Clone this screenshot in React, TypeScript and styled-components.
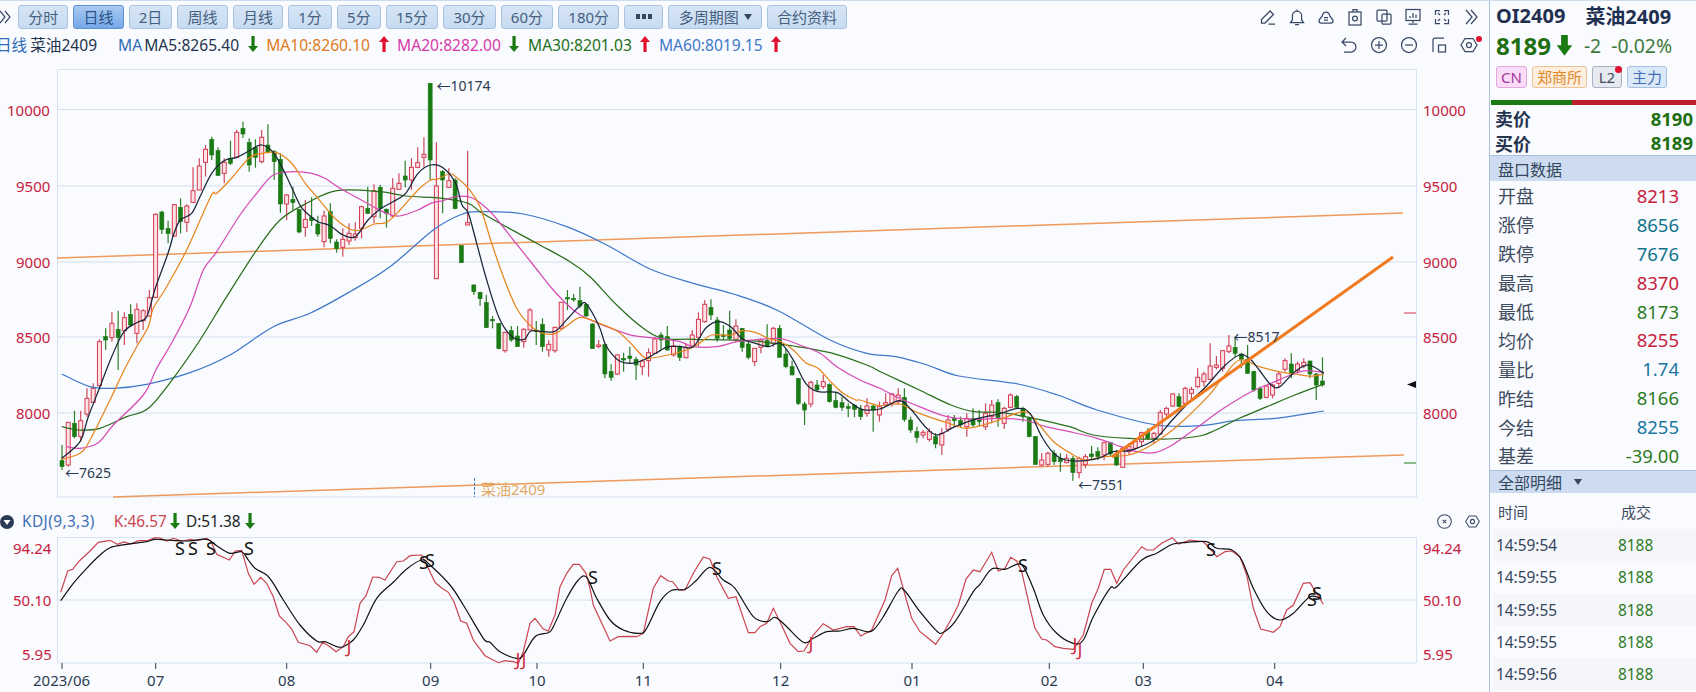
import React from 'react';
import styled, { createGlobalStyle } from 'styled-components';

const GlobalStyle = createGlobalStyle`
  html, body {
    margin: 0;
    padding: 0;
    background: #f9fbff;
    overflow: hidden;
  }
  body {
    font-family: "Noto Sans", "Noto Sans CJK SC", sans-serif;
  }
`;

const Page = styled.div`
  width: 1696px;
  height: 692px;
  box-sizing: border-box;
  border-top: 1px solid #cddcec;
  display: grid;
  grid-template-columns: 1489px 207px;
  overflow: hidden;
  color: #2d3b50;
`;

const Main = styled.div`
  display: flex;
  flex-direction: column;
  min-width: 0;
`;

const Toolbar = styled.div`
  height: 31px;
  display: flex;
  align-items: center;
  gap: 5px;
  padding-right: 8px;
`;

const Collapse = styled.span`
  width: 13px;
  display: flex;
`;

const Btn = styled.button<{ $active?: boolean }>`
  height: 24px;
  box-sizing: border-box;
  padding: 0 9.15px;
  margin: 0;
  border: 1px solid ${(p) => (p.$active ? '#5f92d4' : '#a9c3e0')};
  border-radius: 3px;
  background: ${(p) =>
    p.$active ? 'linear-gradient(#a9c9f1, #76a8e8)' : 'linear-gradient(#d6e5f6, #c8dbf1)'};
  color: ${(p) => (p.$active ? '#2b5385' : '#46607f')};
  font: 15px "Noto Sans", "Noto Sans CJK SC", sans-serif;
  line-height: 22px;
  display: flex;
  align-items: center;
  gap: 5px;
  white-space: nowrap;
`;

const Caret = styled.i`
  width: 0;
  height: 0;
  border-left: 4px solid transparent;
  border-right: 4px solid transparent;
  border-top: 6px solid #34475f;
`;

const IconGroup = styled.div<{ $gap: number }>`
  margin-left: auto;
  display: flex;
  align-items: center;
  gap: ${(p) => p.$gap}px;
`;

const InfoRow = styled.div`
  height: 25px;
  margin: 0 0 5px -4px;
  display: flex;
  align-items: center;
  padding-right: 10px;
  font-size: 15.6px;
  white-space: nowrap;
`;

const Label = styled.span<{ $color: string; $gap?: number; $track?: number }>`
  color: ${(p) => p.$color};
  margin-left: ${(p) => p.$gap ?? 0}px;
  letter-spacing: ${(p) => p.$track ?? 0}px;
`;

const ArrowBox = styled.span<{ $gap?: number }>`
  display: inline-flex;
  margin: 0 ${(p) => p.$gap ?? 8.5}px;
`;

const Chart = styled.svg`
  display: block;
  flex: none;
  font-family: "Noto Sans", "Noto Sans CJK SC", sans-serif;
`;

const KdjHead = styled.div`
  height: 28px;
  flex: none;
  display: flex;
  align-items: center;
  padding: 5px 8px 0 0;
  box-sizing: border-box;
  font-size: 15.4px;
  white-space: nowrap;
`;

const Side = styled.aside`
  border-left: 1px solid #a9c1dc;
  display: flex;
  flex-direction: column;
  min-width: 0;
`;

const TitleRow = styled.div`
  height: 29px;
  padding-left: 6px;
  display: flex;
  align-items: center;
  gap: 20px;
  font-size: 20px;
  font-weight: 700;
  color: #1f2f50;
`;

const PriceRow = styled.div`
  height: 30px;
  padding-left: 6px;
  display: flex;
  align-items: center;
  color: #3f7a3c;
  font-size: 19.4px;
`;

const BigPrice = styled.span`
  font-size: 24px;
  font-weight: 700;
  color: #1f6f12;
  margin-right: 7px;
`;

const TagRow = styled.div`
  margin-top: 6px;
  padding-left: 6px;
  display: flex;
  gap: 5px;
`;

const Tag = styled.span<{ $bg: string; $line: string; $color: string }>`
  position: relative;
  height: 22px;
  box-sizing: border-box;
  padding: 0 4px;
  min-width: 30px;
  border: 1px solid ${(p) => p.$line};
  border-radius: 3px;
  background: ${(p) => p.$bg};
  color: ${(p) => p.$color};
  font-size: 15px;
  line-height: 20px;
  text-align: center;
`;

const Dot = styled.i<{ $size: number; $top: number; $right: number }>`
  position: absolute;
  width: ${(p) => p.$size}px;
  height: ${(p) => p.$size}px;
  top: ${(p) => p.$top}px;
  right: ${(p) => p.$right}px;
  border-radius: 50%;
  background: #e0122f;
`;

const Ratio = styled.div`
  margin: 12px 0 0 1px;
  height: 5px;
  display: flex;
`;

const RatioPart = styled.i<{ $color: string; $grow: number }>`
  flex: ${(p) => p.$grow};
  background: ${(p) => p.$color};
`;

const Quote = styled.div`
  padding: 1px 3px 0 5px;
`;

const QuoteRow = styled.div`
  height: 24.5px;
  display: flex;
  align-items: center;
  justify-content: space-between;
  font-size: 18px;
  font-weight: 700;
  color: #26344f;
`;

const QuoteValue = styled.span`
  font-size: 18.5px;
  color: #1f6f12;
`;

const SectionHead = styled.div<{ $h: number }>`
  height: ${(p) => p.$h}px;
  box-sizing: border-box;
  border-top: 1px solid #a9c1dc;
  background: #cddcf0;
  padding-left: 8px;
  display: flex;
  align-items: center;
  gap: 12px;
  font-size: 16px;
  color: #34475f;
`;

const DataRow = styled.div`
  height: 28.9px;
  padding: 0 17px 0 8px;
  display: flex;
  align-items: center;
  justify-content: space-between;
  font-size: 18px;
  color: #3f4c60;
`;

const DataValue = styled.span<{ $color: string }>`
  font-size: 18.5px;
  color: ${(p) => p.$color};
`;

const TickHead = styled.div`
  height: 36px;
  padding: 2px 0 0 8px;
  box-sizing: border-box;
  display: grid;
  grid-template-columns: 123px 1fr;
  align-items: center;
  font-size: 15px;
  color: #3f4c60;
`;

const TickRow = styled.div<{ $odd: boolean }>`
  height: 32.3px;
  margin-left: 3px;
  padding: 1px 0 0 3px;
  box-sizing: border-box;
  display: grid;
  grid-template-columns: 122px 1fr;
  align-items: center;
  font-size: 15.4px;
  color: #36445a;
  background: ${(p) => (p.$odd ? '#f4f6fa' : 'transparent')};
`;

const TickPrice = styled.span`
  color: #2d7a1f;
`;

const Arrow = ({ up, size = 14, thick }: { up: boolean; size?: number; thick?: boolean }) => {
  const stem = thick ? 'H7.6 V16 H2.4 V8 H-1' : 'H6.6 V16 H3.4 V6 H0';
  const down = thick ? 'M5 16 L11 8 H7.6 V0 H2.4 V8 H-1 Z' : 'M5 16 L10 10 H6.6 V0 H3.4 V10 H0 Z';
  const rise = `M5 0 L${thick ? '11 8' : '10 6'} ${stem} Z`;
  return (
    <svg width={size * 0.72} height={size * 1.15} viewBox="0 0 10 16" overflow="visible">
      <path d={up ? rise : down} fill={up ? '#e0122f' : '#1c7a12'} />
    </svg>
  );
};

const ICONS: Record<string, React.ReactNode> = {
  pencil: <path d="M3.5 16V12.5L12 4l3.5 3.5L7 16ZM10.5 17H17" />,
  bell: <path d="M10 2.5V4M10 4a4.6 4.6 0 0 0-4.6 4.6V13L3.5 15.5h13L14.6 13V8.6A4.6 4.6 0 0 0 10 4ZM8 17.5h4" />,
  cloud: (
    <path d="M3 14c0-2.5 1.8-3 3-4.5C6.5 7 8 5 10 5s3.5 2 4 4.5c1.2 1.5 3 2 3 4.5 0 1.2-1 2-2.2 2H5.2C4 16 3 15.2 3 14ZM8 10.5h4M8 13h4" />
  ),
  shot: (
    <>
      <rect x="4" y="5" width="12" height="13" />
      <path d="M8 5V2.5h4V5" />
      <circle cx="10" cy="11.5" r="2.4" />
    </>
  ),
  copy: (
    <>
      <rect x="3" y="3" width="10" height="11" rx="1" />
      <rect x="8" y="7" width="9" height="10" rx="1" />
    </>
  ),
  monitor: (
    <>
      <rect x="3" y="2.5" width="14" height="11" />
      <path d="M7 11V9M10 11V6M13 11V7.5M10 13.5V16M5.5 17h9" />
    </>
  ),
  full: <path d="M3.5 8V3.5H8M12 3.5h4.5V8M16.5 12v4.5H12M8 16.5H3.5V12M6 6l2 2M14 6l-2 2M14 14l-2-2M6 14l2-2" />,
  chevrons: <path d="M5 3l6 7-6 7M10 3l6 7-6 7" />,
  undo: <path d="M7 3L3 7l4 4M3 7h9a5 5 0 0 1 0 10H5" />,
  plus: (
    <>
      <circle cx="10" cy="10" r="7.5" />
      <path d="M6 10h8M10 6v8" />
    </>
  ),
  minus: (
    <>
      <circle cx="10" cy="10" r="7.5" />
      <path d="M6 10h8" />
    </>
  ),
  layout: (
    <>
      <path d="M15 3H6a2 2 0 0 0-2 2v12" />
      <rect x="9.5" y="10" width="7" height="7" />
    </>
  ),
  hex: (
    <>
      <path d="M6 3.5h8l4 6.5-4 6.5H6L2 10Z" />
      <circle cx="10" cy="10" r="2.5" />
    </>
  ),
  close: (
    <>
      <circle cx="10" cy="10" r="8" />
      <path d="M8 8l4 4M12 8l-4 4" />
    </>
  ),
};

const Icon = ({ name, size = 20 }: { name: string; size?: number }) => (
  <svg width={size} height={size} viewBox="0 0 20 20" fill="none" stroke="#3a4a66" strokeWidth="1.25">
    {ICONS[name]}
  </svg>
);

const HexBadge = styled.span`
  position: relative;
  display: inline-flex;
`;

// coordinates were read off crops of the reference: each helper undoes one crop's scale
const toPts = (raw: number[], x0: number, sx: number, y0: number) => {
  const out: number[][] = [];
  for (let i = 0; i < raw.length; i += 2) out.push([x0 + raw[i] / sx, y0 + raw[i + 1] / 3]);
  return out;
};
const a = (r: number[]) => toPts(r, 0, 3, 70);
const b = (r: number[]) => toPts(r, 400, 3, 70);
const c = (r: number[]) => toPts(r, 860, 2.53, 230);
const k1 = (r: number[]) => toPts(r, 0, 3, 505);
const k2 = (r: number[]) => toPts(r, 490, 3, 505);
const k3 = (r: number[]) => toPts(r, 980, 3, 505);

// crops overlap a little, keep x increasing so seams don't kink
const forward = (pts: number[][]) => {
  const out: number[][] = [];
  pts.forEach((p) => {
    if (!out.length || p[0] > out[out.length - 1][0] + 1) out.push(p);
  });
  return out;
};

// catmull-rom through the read points
const smooth = (raw: number[][]) => {
  const p = forward(raw);
  let d = `M${p[0][0].toFixed(1)} ${p[0][1].toFixed(1)}`;
  for (let i = 0; i < p.length - 1; i++) {
    const p0 = p[i - 1] || p[i];
    const p1 = p[i];
    const p2 = p[i + 1];
    const p3 = p[i + 2] || p2;
    const c1x = p1[0] + (p2[0] - p0[0]) / 6;
    const c1y = p1[1] + (p2[1] - p0[1]) / 6;
    const c2x = p2[0] - (p3[0] - p1[0]) / 6;
    const c2y = p2[1] - (p3[1] - p1[1]) / 6;
    d += `C${c1x.toFixed(1)} ${c1y.toFixed(1)} ${c2x.toFixed(1)} ${c2y.toFixed(1)} ${p2[0].toFixed(1)} ${p2[1].toFixed(1)}`;
  }
  return d;
};

const jagged = (raw: number[][]) =>
  forward(raw)
    .map((p) => `${p[0].toFixed(1)},${p[1].toFixed(1)}`)
    .join(' ');

const MA_LINES = [
  {
    color: '#3f78c9',
    d: smooth([
      ...a([185, 912, 270, 950, 340, 955, 440, 943, 570, 908, 690, 855, 820, 770, 930, 730, 1050, 665, 1170, 590, 1300, 480, 1380, 435]),
      ...b([240, 425, 370, 432, 500, 470, 620, 525, 750, 597, 880, 640, 1000, 672, 1130, 720, 1290, 810, 1400, 850]),
      ...c([0, 362, 90, 380, 170, 405, 250, 438, 400, 462, 500, 495, 600, 540, 750, 585, 860, 587, 950, 572, 1050, 565, 1174, 543]),
    ]),
  },
  {
    color: '#2a6e1a',
    d: smooth([
      ...a([185, 1070, 240, 1080, 300, 1075, 380, 1040, 445, 1015, 520, 925, 600, 810, 680, 680, 770, 540, 840, 450, 920, 400, 1010, 362, 1140, 365, 1217, 378, 1329, 385, 1405, 400]),
      ...b([240, 425, 300, 460, 410, 520, 510, 575, 570, 620, 650, 705, 730, 775, 790, 805, 880, 808, 1050, 812, 1180, 828, 1290, 848, 1400, 885]),
      ...c([0, 398, 60, 430, 150, 480, 230, 525, 290, 545, 360, 548, 440, 565, 530, 590, 590, 615, 680, 625, 780, 627, 860, 618, 900, 600, 960, 565, 1030, 530, 1100, 495, 1174, 462]),
    ]),
  },
  {
    color: '#d64cb4',
    d: smooth([
      ...a([200, 1130, 240, 1135, 295, 1118, 340, 1065, 430, 975, 470, 895, 520, 810, 570, 710, 610, 600, 650, 545, 720, 435, 770, 370, 820, 315, 880, 305, 935, 310, 975, 325, 1020, 355, 1066, 380, 1120, 410, 1160, 430, 1198, 438, 1254, 420, 1292, 400, 1329, 392, 1367, 380, 1405, 380]),
      ...b([240, 398, 280, 435, 340, 510, 400, 585, 460, 660, 520, 720, 560, 745, 620, 770, 700, 797, 780, 805, 840, 815, 880, 830, 950, 830, 1010, 815, 1060, 810, 1140, 806, 1200, 825, 1260, 850, 1310, 890, 1380, 930]),
      ...c([0, 445, 50, 475, 100, 505, 150, 530, 220, 560, 290, 568, 350, 565, 415, 570, 470, 590, 530, 605, 600, 625, 660, 650, 700, 665, 745, 668, 790, 645, 850, 595, 920, 535, 990, 485, 1040, 460, 1090, 435, 1130, 422, 1174, 428]),
    ]),
  },
  {
    color: '#e8871e',
    d: smooth([
      ...a([185, 1168, 240, 1150, 270, 1110, 330, 990, 370, 905, 410, 830, 445, 770, 460, 715, 500, 650, 560, 540, 632, 380, 650, 370, 690, 330, 747, 265, 785, 250, 830, 248, 875, 280, 916, 340, 954, 385, 1010, 450, 1066, 482, 1123, 462, 1160, 457, 1200, 420, 1254, 360, 1292, 330, 1311, 328, 1348, 312, 1367, 320]),
      ...b([205, 355, 240, 410, 275, 520, 310, 620, 350, 715, 392, 768, 430, 790, 467, 790, 504, 765, 542, 742, 598, 760, 654, 785, 692, 820, 730, 860, 748, 865, 804, 855, 860, 840, 898, 820, 935, 795, 992, 795, 1029, 782, 1067, 788, 1105, 805, 1142, 815, 1180, 840, 1217, 878, 1254, 895, 1292, 935, 1329, 970, 1367, 990]),
      ...c([0, 510, 50, 527, 100, 522, 150, 550, 220, 578, 270, 595, 340, 575, 415, 545, 450, 580, 490, 635, 540, 675, 570, 690, 620, 680, 680, 675, 730, 650, 780, 610, 820, 570, 880, 500, 920, 440, 960, 390, 1010, 410, 1060, 425, 1100, 432, 1140, 438, 1174, 432]),
    ]),
  },
  {
    color: '#18263a',
    d: smooth([
      ...a([185, 1165, 240, 1115, 265, 1040, 300, 950, 335, 860, 372, 785, 410, 758, 440, 740, 466, 655, 504, 550, 522, 490, 541, 450, 575, 430, 600, 380, 635, 310, 672, 272, 710, 262, 747, 243, 785, 225, 822, 250, 860, 320, 897, 400, 916, 425, 954, 455, 991, 467, 1029, 495, 1066, 500, 1104, 450, 1141, 417, 1179, 395, 1217, 370, 1254, 310, 1292, 285, 1329, 293, 1367, 340, 1386, 405]),
      ...b([205, 430, 230, 520, 260, 630, 298, 745, 336, 800, 373, 808, 392, 783, 430, 785, 467, 783, 504, 745, 542, 705, 560, 703, 598, 770, 617, 825, 654, 870, 692, 880, 730, 870, 767, 850, 804, 830, 842, 830, 880, 830, 917, 775, 954, 755, 992, 770, 1029, 808, 1067, 820, 1105, 830, 1142, 820, 1180, 870, 1217, 940, 1254, 965, 1310, 967, 1348, 995, 1386, 1018]),
      ...c([0, 545, 50, 537, 100, 512, 130, 540, 165, 590, 195, 615, 240, 590, 290, 568, 350, 552, 400, 535, 430, 550, 460, 620, 490, 670, 520, 690, 570, 692, 610, 682, 640, 665, 680, 662, 720, 645, 750, 625, 790, 570, 830, 520, 875, 470, 920, 410, 960, 375, 985, 385, 1010, 420, 1040, 465, 1062, 470, 1100, 425, 1135, 405, 1174, 430]),
    ]),
  },
];

const K_LINE = jagged([
  ...k1([182, 262, 203, 198, 218, 193, 238, 168, 268, 140, 295, 112, 330, 106, 352, 118, 372, 111, 392, 117, 415, 107, 445, 106, 465, 98, 480, 99, 500, 108, 520, 100, 545, 108, 572, 103, 590, 107, 620, 100, 632, 108, 650, 148, 688, 165, 706, 138, 725, 136, 745, 205, 762, 238, 782, 217, 800, 235, 820, 275, 838, 333, 858, 352, 875, 372, 895, 412, 930, 422, 950, 442, 968, 412, 990, 425, 1008, 440, 1030, 425, 1045, 395, 1062, 380, 1080, 295, 1098, 272, 1118, 216, 1138, 217, 1155, 225, 1190, 170, 1210, 168, 1230, 152, 1265, 150, 1285, 190, 1305, 232, 1320, 245, 1345, 262, 1362, 290, 1382, 348, 1400, 355, 1420, 405, 1455, 452, 1495, 473]),
  ...k2([25, 473, 45, 467, 70, 470, 85, 475, 100, 440, 120, 355, 135, 340, 160, 372, 175, 378, 195, 330, 210, 245, 230, 205, 250, 178, 268, 178, 288, 205, 300, 250, 310, 300, 360, 408, 385, 395, 410, 394, 440, 395, 460, 385, 490, 250, 512, 212, 535, 228, 548, 230, 567, 255, 585, 255, 610, 205, 640, 156, 660, 163, 680, 215, 715, 280, 738, 275, 775, 383, 795, 383, 810, 365, 830, 355, 850, 310, 870, 350, 900, 415, 925, 440, 942, 438, 970, 390, 1000, 356, 1030, 375, 1070, 365, 1092, 365, 1112, 393, 1145, 375, 1185, 285, 1205, 212, 1223, 190, 1245, 270, 1265, 340, 1290, 380, 1315, 400, 1337, 418, 1360, 385, 1385, 340, 1405, 300, 1428, 222, 1450, 195, 1470, 200]),
  ...k3([0, 195, 35, 142, 55, 198, 75, 190, 92, 157, 110, 168, 125, 200, 150, 310, 165, 370, 185, 402, 200, 405, 225, 425, 250, 430, 280, 433, 310, 390, 335, 295, 355, 250, 373, 193, 392, 193, 410, 235, 430, 195, 485, 125, 500, 135, 520, 135, 545, 115, 577, 98, 595, 117, 630, 105, 670, 110, 690, 130, 710, 155, 735, 140, 755, 138, 780, 155, 800, 210, 820, 310, 842, 372, 880, 382, 900, 365, 920, 315, 940, 300, 970, 235, 990, 233, 1030, 298]),
]);

const D_LINE = smooth([
  ...k1([182, 287, 220, 235, 260, 190, 300, 150, 330, 128, 380, 118, 440, 110, 465, 103, 500, 105, 560, 108, 620, 103, 650, 122, 690, 145, 725, 140, 745, 165, 765, 190, 800, 210, 820, 235, 850, 285, 900, 360, 950, 408, 975, 410, 1010, 425, 1030, 425, 1060, 405, 1090, 360, 1130, 280, 1180, 232, 1220, 192, 1265, 165, 1290, 180, 1350, 240, 1390, 300, 1450, 400]),
  ...k2([0, 412, 30, 440, 80, 460, 100, 450, 135, 395, 175, 383, 190, 365, 230, 280, 265, 225, 290, 217, 320, 280, 360, 345, 400, 375, 450, 385, 470, 370, 510, 290, 545, 256, 585, 253, 620, 225, 660, 187, 700, 225, 735, 250, 790, 335, 830, 350, 855, 337, 885, 360, 940, 412, 970, 400, 1010, 380, 1050, 378, 1090, 370, 1130, 380, 1150, 375, 1180, 335, 1225, 258, 1243, 256, 1290, 320, 1340, 378, 1360, 382, 1395, 350, 1450, 260]),
  ...k3([0, 238, 35, 192, 75, 193, 110, 178, 130, 185, 160, 250, 190, 330, 230, 385, 280, 415, 310, 405, 340, 335, 390, 250, 410, 245, 485, 165, 530, 145, 577, 118, 620, 112, 680, 110, 710, 130, 755, 135, 785, 165, 820, 250, 860, 320, 900, 345, 940, 325, 990, 275, 1025, 282]),
]);

// wick top, body top, body bottom, wick bottom, 1 = rising
type Candle = [number, number, number, number, number];

const CANDLES_A: Candle[] = [
  [1125, 1172, 1190, 1200, 0], [1057, 1057, 1185, 1190, 1], [1022, 1060, 1100, 1105, 0], [1022, 1052, 1100, 1115, 1],
  [955, 985, 1032, 1040, 1], [940, 955, 997, 1000, 1], [808, 815, 947, 950, 1], [775, 800, 810, 840, 0],
  [727, 760, 803, 815, 1], [722, 778, 803, 900, 0], [727, 743, 782, 825, 1], [703, 733, 765, 770, 0],
  [700, 718, 790, 820, 1], [718, 722, 752, 780, 1], [660, 683, 738, 740, 1], [430, 433, 682, 685, 1],
  [422, 426, 478, 492, 0], [452, 475, 491, 520, 0], [403, 404, 498, 500, 1], [385, 412, 455, 490, 0],
  [403, 408, 457, 485, 1], [292, 362, 397, 398, 1], [265, 288, 360, 360, 1], [225, 238, 277, 320, 1],
  [200, 208, 255, 270, 0], [232, 242, 316, 318, 0], [265, 277, 310, 340, 1], [212, 265, 280, 285, 0],
  [180, 187, 262, 265, 1], [155, 175, 192, 203, 0], [205, 217, 285, 305, 0], [208, 233, 262, 293, 0],
  [180, 202, 275, 280, 1], [163, 225, 248, 250, 0], [240, 245, 275, 330, 0], [250, 268, 402, 428, 0],
  [372, 375, 402, 450, 1], [350, 388, 398, 420, 0], [418, 418, 486, 490, 0], [390, 448, 472, 500, 1],
  [382, 443, 452, 468, 0], [437, 462, 492, 500, 0], [422, 438, 515, 532, 1], [400, 425, 505, 520, 0],
  [508, 516, 536, 548, 0], [475, 508, 532, 560, 1], [460, 490, 513, 525, 1], [457, 492, 503, 512, 1],
  [407, 410, 475, 505, 1], [350, 415, 430, 432, 0], [343, 362, 440, 460, 1], [345, 352, 415, 445, 0],
  [415, 418, 430, 473, 0], [325, 355, 438, 440, 1], [310, 340, 358, 360, 1], [272, 318, 330, 352, 0],
  [265, 292, 330, 360, 1], [232, 278, 292, 295, 1], [202, 253, 262, 290, 1], [40, 40, 270, 330, 0],
  [217, 348, 626, 627, 1], [300, 305, 330, 430, 0], [295, 332, 352, 355, 1], [325, 330, 416, 418, 0],
  [527, 527, 578, 578, 0], [242, 458, 465, 465, 1], [643, 645, 665, 675, 0], [665, 667, 686, 708, 0],
  [675, 698, 773, 773, 0], [738, 748, 750, 775, 0], [760, 760, 836, 838, 0], [785, 787, 842, 848, 1],
  [768, 782, 810, 815, 0], [768, 798, 830, 830, 0], [775, 778, 815, 833, 1], [715, 720, 780, 780, 1],
  [753, 780, 785, 825, 0], [745, 763, 830, 845, 0], [810, 823, 840, 860, 1], [770, 772, 842, 848, 1],
  [695, 697, 775, 775, 1], [660, 682, 687, 720, 0], [672, 685, 688, 695, 0], [650, 692, 708, 715, 0],
  [700, 703, 738, 740, 0], [760, 762, 836, 836, 0], [810, 825, 828, 835, 1], [822, 824, 912, 925, 0],
  [883, 905, 922, 932, 0], [852, 855, 912, 915, 1], [848, 865, 870, 905, 0], [830, 858, 865, 880, 0],
  [860, 868, 885, 930, 0], [868, 873, 890, 915, 1], [835, 848, 872, 920, 1], [800, 807, 850, 852, 1],
  [787, 795, 810, 840, 0], [768, 800, 840, 842, 0], [810, 828, 855, 860, 1], [825, 830, 862, 873, 0],
  [820, 832, 863, 865, 1], [780, 795, 828, 830, 1], [727, 748, 802, 830, 1], [690, 703, 755, 758, 1],
  [688, 712, 735, 750, 0], [740, 750, 805, 815, 0], [765, 795, 800, 810, 0], [722, 780, 805, 810, 0],
  [748, 768, 808, 815, 1], [775, 775, 832, 845, 0], [815, 822, 862, 868, 0], [835, 835, 875, 888, 1],
  [805, 810, 832, 850, 1], [763, 812, 830, 832, 0], [770, 775, 820, 830, 1], [765, 775, 862, 862, 0],
  [835, 852, 890, 895, 0], [872, 890, 915, 915, 0], [925, 925, 1000, 1005, 0], [995, 1002, 1020, 1065, 0],
  [932, 937, 1002, 1012, 1], [930, 945, 960, 965, 0], [915, 935, 950, 957, 1], [940, 944, 995, 998, 0],
  [965, 992, 1012, 1015, 0], [980, 998, 1012, 1022, 0], [1000, 1010, 1015, 1042, 0], [1003, 1005, 1018, 1042, 0],
  [1005, 1018, 1040, 1050, 0], [985, 1008, 1030, 1040, 1], [1005, 1008, 1020, 1085, 0],
];

const CANDLES_B: Candle[] = [
  [515, 530, 555, 575, 1], [490, 518, 525, 530, 1], [488, 492, 520, 530, 1], [475, 495, 515, 525, 1],
  [475, 502, 568, 575, 0], [560, 570, 600, 608, 0], [590, 605, 622, 638, 0], [600, 607, 615, 625, 1],
  [595, 605, 628, 635, 1], [610, 620, 642, 655, 0], [595, 610, 645, 675, 1], [555, 570, 598, 605, 1],
  [555, 565, 572, 590, 0], [560, 572, 585, 592, 0], [550, 565, 590, 620, 1], [535, 565, 585, 590, 0],
  [540, 565, 575, 590, 0], [520, 550, 590, 600, 1], [510, 525, 560, 580, 1], [508, 518, 565, 590, 0],
  [530, 535, 580, 597, 1], [490, 495, 532, 535, 1], [495, 500, 532, 535, 0], [530, 535, 560, 575, 0],
  [560, 562, 620, 622, 0], [618, 620, 703, 705, 0], [670, 690, 705, 710, 1], [665, 670, 703, 710, 1],
  [660, 670, 695, 705, 0], [670, 685, 695, 725, 0], [672, 685, 698, 700, 1], [678, 685, 728, 752, 0],
  [680, 685, 728, 745, 1], [672, 680, 703, 715, 1], [648, 672, 680, 690, 0], [652, 665, 680, 690, 0],
  [635, 638, 675, 690, 1], [635, 638, 672, 680, 0], [660, 672, 705, 708, 0], [650, 655, 712, 712, 1],
  [640, 650, 665, 675, 1], [625, 635, 655, 660, 1], [605, 608, 635, 650, 1], [595, 605, 625, 630, 0],
  [605, 610, 625, 640, 1], [540, 548, 612, 615, 1], [530, 535, 552, 560, 1], [490, 492, 528, 530, 1],
  [490, 500, 530, 530, 0], [470, 475, 520, 525, 1], [470, 478, 490, 510, 1], [415, 442, 470, 475, 1],
  [425, 432, 455, 470, 1], [340, 408, 448, 450, 1], [378, 405, 412, 418, 1], [360, 362, 415, 425, 1],
  [315, 348, 365, 370, 1], [320, 352, 370, 380, 0], [368, 372, 388, 415, 0], [345, 388, 430, 432, 0],
  [422, 424, 480, 485, 0], [470, 476, 505, 510, 0], [465, 468, 502, 505, 1], [462, 465, 495, 505, 1],
  [425, 432, 460, 475, 1], [385, 392, 418, 425, 1], [370, 402, 432, 445, 0], [395, 402, 422, 430, 1],
  [385, 397, 408, 415, 1], [392, 393, 432, 445, 0], [430, 432, 465, 510, 0], [382, 453, 465, 470, 0],
];

const candles = [
  ...CANDLES_A.map((d) => d.map((v, i) => (i < 4 ? 70 + v / 3 : v))),
  ...CANDLES_B.map((d) => d.map((v, i) => (i < 4 ? 230 + v / 3 : v))),
];

const PRICE_GRID = [
  { y: 109.5, t: '10000', lx: 7 },
  { y: 186, t: '9500', lx: 16 },
  { y: 262, t: '9000', lx: 16 },
  { y: 337, t: '8500', lx: 16 },
  { y: 413, t: '8000', lx: 16 },
];

const X_TICKS = [
  { x: 62, t: '2023/06' },
  { x: 155.7, t: '07' },
  { x: 286.7, t: '08' },
  { x: 430.7, t: '09' },
  { x: 537, t: '10' },
  { x: 643.3, t: '11' },
  { x: 780.7, t: '12' },
  { x: 912, t: '01' },
  { x: 1049.3, t: '02' },
  { x: 1143.3, t: '03' },
  { x: 1274.7, t: '04' },
];

const KDJ_LEVELS = [
  { y: 548, t: '94.24', lx: 13, line: false },
  { y: 600, t: '50.10', lx: 13, line: true },
  { y: 654, t: '5.95', lx: 22, line: false },
];

const MARKS = [
  { x: 180, y: 555, t: 'S' },
  { x: 193, y: 555, t: 'S' },
  { x: 211, y: 555, t: 'S' },
  { x: 249, y: 555, t: 'S' },
  { x: 424, y: 569, t: 'S' },
  { x: 430, y: 567, t: 'S' },
  { x: 349, y: 653, t: 'J' },
  { x: 518, y: 666, t: 'J' },
  { x: 524, y: 666, t: 'J' },
  { x: 593, y: 584, t: 'S' },
  { x: 717, y: 575, t: 'S' },
  { x: 811, y: 650, t: 'J' },
  { x: 1023, y: 572, t: 'S' },
  { x: 1075, y: 651, t: 'J' },
  { x: 1080, y: 656, t: 'J' },
  { x: 1211, y: 556, t: 'S' },
  { x: 1312, y: 606, t: 'S' },
  { x: 1317, y: 600, t: 'S' },
];

const TEXT_RED = '#c8203c';

const PriceChart = () => (
  <Chart width={1489} height={443} viewBox="0 62 1489 443">
    <rect x="57.5" y="69.5" width="1359" height="427.5" fill="none" stroke="#d6e3f2" />
    {PRICE_GRID.map((g) => (
      <g key={g.t}>
        <line x1="57" x2="1417" y1={g.y} y2={g.y} stroke="#d3e0f0" strokeWidth="1.2" />
        <text x={g.lx} y={g.y + 6} fontSize="15" fill={TEXT_RED}>{g.t}</text>
        <text x="1423" y={g.y + 6} fontSize="15" fill={TEXT_RED}>{g.t}</text>
      </g>
    ))}
    <line x1="57" y1="258" x2="1403" y2="213" stroke="#ee9a5c" strokeWidth="1.5" />
    <line x1="113" y1="497" x2="1404" y2="455" stroke="#ee9a5c" strokeWidth="1.5" />
    {candles.map((d, i) => {
      const x = 62 + i * 6.24;
      const col = d[4] ? '#d8394f' : '#1c7a14';
      return (
        <g key={i}>
          <line x1={x} x2={x} y1={d[0]} y2={d[3]} stroke={d[4] ? '#c94a5a' : '#2f7d28'} strokeWidth="1.2" />
          <rect
            x={x - 2}
            y={d[1]}
            width="4"
            height={Math.max(d[2] - d[1], 1.5)}
            fill={d[4] ? '#fbe3e7' : col}
            stroke={col}
            strokeWidth={d[4] ? 1 : 0.6}
          />
        </g>
      );
    })}
    {MA_LINES.map((l) => (
      <path key={l.color} d={l.d} fill="none" stroke={l.color} strokeWidth="1.25" />
    ))}
    <line x1="1112" y1="457" x2="1393" y2="257" stroke="#f07a20" strokeWidth="3" />
    <line x1="474.5" x2="474.5" y1="478" y2="497" stroke="#3f78c9" strokeDasharray="3 1.5" />
    <text x="481" y="494.5" fontSize="15" fill="#e2a864">菜油2409</text>
    <text x="65" y="478" fontSize="14" fill="#2d3b50">←7625</text>
    <text x="436.5" y="90.5" fontSize="14" fill="#2d3b50">←10174</text>
    <text x="1078" y="490" fontSize="14" fill="#2d3b50">←7551</text>
    <text x="1233.5" y="342" fontSize="14" fill="#2d3b50">←8517</text>
    <line x1="1404" x2="1416" y1="313" y2="313" stroke="#d8394f" />
    <line x1="1404" x2="1416" y1="463" y2="463" stroke="#1c7a14" />
    <path d="M1407 384.5 L1416 381 V388 Z" fill="#111" />
  </Chart>
);

const KdjChart = () => (
  <Chart width={1489} height={159} viewBox="0 533 1489 159">
    <path d="M57.5 663V537.5H1416.5V663H57.5" fill="none" stroke="#d6e3f2" />
    {KDJ_LEVELS.map((l) => (
      <g key={l.t}>
        {l.line && <line x1="57" x2="1417" y1={l.y} y2={l.y} stroke="#d3e0f0" strokeWidth="1.2" />}
        <text x={l.lx} y={l.y + 5.5} fontSize="15" fill={TEXT_RED}>{l.t}</text>
        <text x="1423" y={l.y + 5.5} fontSize="15" fill={TEXT_RED}>{l.t}</text>
      </g>
    ))}
    <polyline points={K_LINE} fill="none" stroke="#cc4450" strokeWidth="1.2" />
    <path d={D_LINE} fill="none" stroke="#111" strokeWidth="1.2" />
    {MARKS.map((m, i) => (
      <text key={i} x={m.x} y={m.y} fontSize="18" textAnchor="middle" fill={m.t === 'J' ? '#d12c40' : '#111'}>{m.t}</text>
    ))}
    {X_TICKS.map((t) => (
      <g key={t.t}>
        <line x1={t.x} x2={t.x} y1="663" y2="669" stroke="#2d3b50" />
        <text x={t.t.length > 2 ? 33 : t.x} y="686" fontSize="15" textAnchor={t.t.length > 2 ? 'start' : 'middle'} fill="#2d3b50">{t.t}</text>
      </g>
    ))}
  </Chart>
);

const BUTTONS = ['分时', '日线', '2日', '周线', '月线', '1分', '5分', '15分', '30分', '60分', '180分'];

const QUOTE_DATA: [string, string, string][] = [
  ['开盘', '8213', '#c8203c'],
  ['涨停', '8656', '#0f7389'],
  ['跌停', '7676', '#0f7389'],
  ['最高', '8370', '#c8203c'],
  ['最低', '8173', '#2d7a1f'],
  ['均价', '8255', '#c8203c'],
  ['量比', '1.74', '#1a76a0'],
  ['昨结', '8166', '#2d7a1f'],
  ['今结', '8255', '#1a76a0'],
  ['基差', '-39.00', '#2d7a1f'],
];

const TICKS = ['14:59:54', '14:59:55', '14:59:55', '14:59:55', '14:59:56'];

const App: React.FC = () => {
  return (
    <Page>
      <GlobalStyle />
      <Main>
        <Toolbar>
          <Collapse>
            <svg width="13" height="20" viewBox="0 0 13 20" fill="none" stroke="#3a4a66" strokeWidth="1.2">
              <path d="M0 4l5 6-5 6M5 4l5 6-5 6" />
            </svg>
          </Collapse>
          {BUTTONS.map((b) => (
            <Btn key={b} $active={b === '日线'}>{b}</Btn>
          ))}
          <Btn>
            <svg width="19" height="6" viewBox="0 0 19 6" fill="#34475f">
              <rect x="2" y="0" width="4" height="5" />
              <rect x="8" y="0" width="4" height="5" />
              <rect x="14" y="0" width="4" height="5" />
            </svg>
          </Btn>
          <Btn>多周期图<Caret /></Btn>
          <Btn>合约资料</Btn>
          <IconGroup $gap={9}>
            <Icon name="pencil" />
            <Icon name="bell" />
            <Icon name="cloud" />
            <Icon name="shot" />
            <Icon name="copy" />
            <Icon name="monitor" />
            <Icon name="full" />
            <Icon name="chevrons" />
          </IconGroup>
        </Toolbar>
        <InfoRow>
          <Label $color="#2f6db5">日线</Label>
          <Label $color="#24344c" $gap={3}>菜油2409</Label>
          <Label $color="#2f6db5" $gap={21}>MA</Label>
          <Label $color="#24344c" $gap={2}>MA5:8265.40</Label>
          <ArrowBox><Arrow up={false} /></ArrowBox>
          <Label $color="#e07a1c">MA10:8260.10</Label>
          <ArrowBox><Arrow up /></ArrowBox>
          <Label $color="#d63aa8">MA20:8282.00</Label>
          <ArrowBox><Arrow up={false} /></ArrowBox>
          <Label $color="#23701a">MA30:8201.03</Label>
          <ArrowBox><Arrow up /></ArrowBox>
          <Label $color="#3f78c9">MA60:8019.15</Label>
          <ArrowBox><Arrow up /></ArrowBox>
          <IconGroup $gap={10}>
            <Icon name="undo" />
            <Icon name="plus" />
            <Icon name="minus" />
            <Icon name="layout" />
            <HexBadge>
              <Icon name="hex" />
              <Dot $size={6} $top={1} $right={-3} />
            </HexBadge>
          </IconGroup>
        </InfoRow>
        <PriceChart />
        <KdjHead>
          <svg width="14" height="14" viewBox="0 0 14 14">
            <circle cx="7" cy="7" r="7" fill="#2b3a55" />
            <path d="M3.5 5h7L7 10Z" fill="#fff" />
          </svg>
          <Label $color="#3f6fb5" $gap={8} $track={0.4}>KDJ(9,3,3)</Label>
          <Label $color="#cc4450" $gap={19}>K:46.57</Label>
          <ArrowBox $gap={3}><Arrow up={false} /></ArrowBox>
          <Label $color="#222" $gap={3}>D:51.38</Label>
          <ArrowBox $gap={4}><Arrow up={false} /></ArrowBox>
          <IconGroup $gap={11}>
            <Icon name="close" size={17} />
            <Icon name="hex" size={17} />
          </IconGroup>
        </KdjHead>
        <KdjChart />
      </Main>
      <Side>
        <TitleRow>
          <span>OI2409</span>
          <span>菜油2409</span>
        </TitleRow>
        <PriceRow>
          <BigPrice>8189</BigPrice>
          <Arrow up={false} size={18} thick />
          <Label $color="#3f7a3c" $gap={13}>-2</Label>
          <Label $color="#3f7a3c" $gap={10}>-0.02%</Label>
        </PriceRow>
        <TagRow>
          <Tag $bg="#fbdcf6" $line="#e5a8dc" $color="#a03a9c">CN</Tag>
          <Tag $bg="#fdeedd" $line="#ecc49a" $color="#de8a2c">郑商所</Tag>
          <Tag $bg="#e6e9f0" $line="#a9b2c2" $color="#3f4c60">
            L2
            <Dot $size={7} $top={-1} $right={-1} />
          </Tag>
          <Tag $bg="#dbe8f8" $line="#a6c1e2" $color="#3f6fb5">主力</Tag>
        </TagRow>
        <Ratio>
          <RatioPart $color="#1c7a14" $grow={81} />
          <RatioPart $color="#b91f2c" $grow={124} />
        </Ratio>
        <Quote>
          <QuoteRow>卖价<QuoteValue>8190</QuoteValue></QuoteRow>
          <QuoteRow>买价<QuoteValue>8189</QuoteValue></QuoteRow>
        </Quote>
        <SectionHead $h={26}>盘口数据</SectionHead>
        {QUOTE_DATA.map(([name, value, color]) => (
          <DataRow key={name}>
            {name}
            <DataValue $color={color}>{value}</DataValue>
          </DataRow>
        ))}
        <SectionHead $h={23}>
          全部明细
          <Caret />
        </SectionHead>
        <TickHead>
          <span>时间</span>
          <span>成交</span>
        </TickHead>
        {TICKS.map((t, i) => (
          <TickRow key={i} $odd={i % 2 === 0}>
            {t}
            <TickPrice>8188</TickPrice>
          </TickRow>
        ))}
      </Side>
    </Page>
  );
};

export default App;
